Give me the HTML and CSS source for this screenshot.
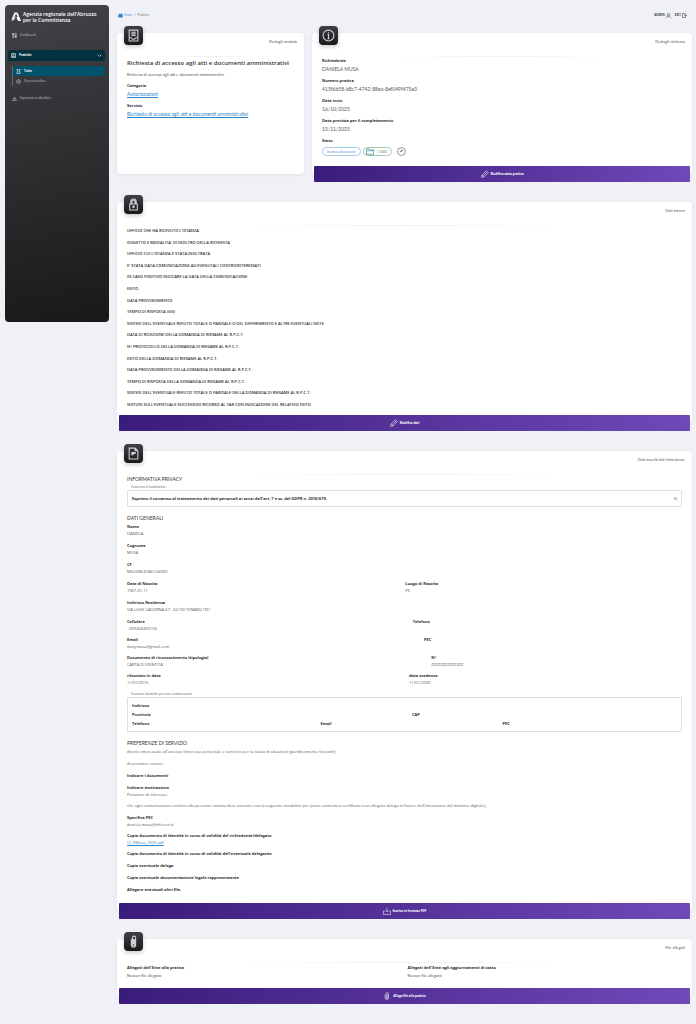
FILE: index.html
```html
<!DOCTYPE html>
<html lang="it">

<head>
	<meta charset="UTF-8">
	<meta name="viewport" content="width=device-width, initial-scale=1.0">
	<title>Pratiche</title>
	<link rel="stylesheet" href="styles.css">
</head>

<body>
	<aside class="sidebar">
		<a class="brand" href="#">
			<svg class="brand-logo" viewBox="0 0 20 20"><path d="M7 1h6l3 7-3 1-3-6-5 12H1z" /><path d="M10 7c0 5-3 10-9 11l1-2c4-1 6-4 8-9zM11 10l5-2 4 10h-5c-2-1-3-4-4-8z" /></svg>
			<span>Agenzia regionale dell'Abruzzo<br>per la Committenza</span>
		</a>
		<nav class="menu">
			<a class="menu-item" href="#">
				<svg class="ico" viewBox="0 0 16 16"><path class="fill" d="M1 1h6v8H1zM1 11h6v4H1zM9 1h6v4H9zM9 7h6v8H9z" /></svg>
				Dashboard
			</a>
			<a class="menu-item open" href="#">
				<svg class="ico" viewBox="0 0 16 16"><path d="M2 1h12v14H2zM5 4h6M5 7h6M2 11h4l1 2h2l1-2h4" /></svg>
				Pratiche
				<svg class="ico arrow" viewBox="0 0 16 16"><path d="M2 5l6 6 6-6" /></svg>
			</a>
			<div class="submenu">
				<a class="menu-item active" href="#">
					<svg class="ico" viewBox="0 0 16 16"><path d="M3 1h10v4l-4 3 4 3v4H3v-4l4-3-4-3z" /></svg>
					Tutte
				</a>
				<a class="menu-item" href="#">
					<svg class="ico" viewBox="0 0 16 16"><circle cx="8" cy="8" r="6" /><path d="M5 8h6" /></svg>
					Da protocollare
				</a>
			</div>
			<a class="menu-item export" href="#">
				<svg class="ico" viewBox="0 0 16 16"><path d="M2 14l3-6h6l3 6zM8 8V3" /></svg>
				Esportazione Actafisio
			</a>
		</nav>
	</aside>

	<main class="main">
		<header class="topbar">
			<nav class="breadcrumb">
				<a href="#"><svg class="ico" viewBox="0 0 16 16"><path class="fill" d="M1 4h3V2h9v2h2v10H1z" /></svg>Home</a>
				<span>/</span>
				<span>Pratiche</span>
			</nav>
			<nav class="user">
				<a href="#">ADMIN <svg class="ico" viewBox="0 0 16 16"><circle cx="8" cy="5" r="4" /><path d="M2 16c0-4 3-6 6-6s6 2 6 6" /></svg></a>
				<a href="#">ESCI <svg class="ico" viewBox="0 0 16 16"><path d="M11 5V2H1v12h10v-3M7 8h8M12 5l3 3-3 3" /></svg></a>
			</nav>
		</header>

		<div class="cards-row">
			<section class="card">
				<div class="card-head">
					<span class="badge"><svg viewBox="0 0 24 24"><path d="M4 2h16v20H4zM8 6h8M8 9h8M8 12h8M4 16h4l2 3h4l2-3h4" /></svg></span>
					<span>Dettagli modulo</span>
				</div>
				<h1>Richiesta di accesso agli atti e documenti amministrativi</h1>
				<p class="subtitle">Richiesta di accesso agli atti e documenti amministrativi</p>
				<dl class="details">
					<div>
						<dt>Categoria</dt>
						<dd><a href="#">Autorizzazioni</a></dd>
					</div>
					<div>
						<dt>Servizio</dt>
						<dd><a href="#">Richiesta di accesso agli atti e documenti amministrativi</a></dd>
					</div>
				</dl>
			</section>

			<section class="card">
				<div class="card-head">
					<span class="badge"><svg viewBox="0 0 24 24"><circle cx="12" cy="12" r="10" /><path d="M10 10h2v8M10 18h4M12 6v2" /></svg></span>
					<span>Dettagli richiesta</span>
				</div>
				<dl class="details">
					<div>
						<dt>Richiedente</dt>
						<dd>DANIELA MUSA</dd>
					</div>
					<div>
						<dt>Numero pratica</dt>
						<dd>415f6b58-b8c7-4742-88ea-8ef049f475e3</dd>
					</div>
					<div>
						<dt>Data invio</dt>
						<dd>16/10/2025</dd>
					</div>
					<div>
						<dt>Data prevista per il completamento</dt>
						<dd>15/11/2025</dd>
					</div>
					<div>
						<dt>Stato</dt>
						<dd class="status">
							<span class="pill">In attesa di revisione</span>
							<span class="pill green"><svg viewBox="0 0 20 16"><path d="M1 15V1h6l2 3h10v11zM1 6h18" /></svg>123456</span>
							<svg class="clock" viewBox="0 0 16 16"><circle cx="8" cy="8" r="7" /><path d="M8 4v4H5M11 5l-3 3" /></svg>
						</dd>
					</div>
				</dl>
				<button type="button" class="action"><svg viewBox="0 0 16 16"><path d="M1 15l1-5 9-9 4 4-9 9zM9 3l4 4M2 10l4 4M4 12l7-7" /></svg>Modifica stato pratica</button>
			</section>
		</div>

		<section class="card internal">
			<div class="card-head">
				<span class="badge"><svg viewBox="0 0 24 24"><path d="M5 11h14v11H5zM7 11V7c0-7 10-7 10 0v4M9 11V7c0-4 6-4 6 0v4M12 15v4M11 15h2v2h-2z" /></svg></span>
				<span>Dati interni</span>
			</div>
			<ul class="internal-list">
				<li>UFFICIO CHE HA RICEVUTO L'ISTANZA</li>
				<li>OGGETTO E MODALITA' DI INOLTRO DELLA RICHIESTA</li>
				<li>UFFICIO CUI L'ISTANZA È STATA INOLTRATA</li>
				<li>E' STATA DATA COMUNICAZIONE AD EVENUTALI CONTROINTERESSATI</li>
				<li>IN CASO POSITIVO INDICARE LA DATA DELLA COMUNICAZIONE</li>
				<li>ESITO</li>
				<li>DATA PROVVEDIMENTO</li>
				<li>TEMPO DI RISPOSTA (GG)</li>
				<li>SINTESI DELL'EVENTUALE RIFIUTO TOTALE O PARZIALE O DEL DIFFERIMENTO E ALTRE EVENTUALI NOTE</li>
				<li>DATA DI RICEZIONE DELLA DOMANDA DI RIESAME AL R.P.C.T.</li>
				<li>N° PROTOCOLLO DELLA DOMANDA DI RIESAME AL R.P.C.T.</li>
				<li>ESITO DELLA DOMANDA DI RIESAME AL R.P.C.T.</li>
				<li>DATA PROVVEDIMENTO DELLA DOMANDA DI RIESAME AL R.P.C.T.</li>
				<li>TEMPO DI RISPOSTA DELLA DOMANDA DI RIESAME AL R.P.C.T.</li>
				<li>SINTESI DELL'EVENTUALE RIFIUTO TOTALE O PARZIALE DELLA DOMANDA DI RIESAME AL R.P.C.T.</li>
				<li>NOTIZIE SULL'EVENTUALE SUCCESSIVO RICORSO AL TAR CON INDICAZIONE DEL RELATIVO ESITO</li>
			</ul>
			<button type="button" class="action"><svg viewBox="0 0 16 16"><path d="M1 15l1-5 9-9 4 4-9 9zM9 3l4 4M2 10l4 4M4 12l7-7" /></svg>Modifica dati</button>
		</section>

		<section class="card">
			<div class="card-head">
				<span class="badge"><svg viewBox="0 0 24 24"><path d="M4 2h11l5 5v15H4zM15 2v5h5M8 10h8M8 12h8M8 14h4" /></svg></span>
				<span>Dati inseriti dal richiedente</span>
			</div>

			<h2>INFORMATIVA PRIVACY</h2>
			<fieldset>
				<legend>Consenso al trattamento</legend>
				<div class="box consent">
					<b>Esprimo il consenso al trattamento dei dati personali ai sensi dell'art. 7 e ss. del GDPR n. 2016/679.</b>
					<span>Sì</span>
				</div>
			</fieldset>

			<h2 class="general-title">DATI GENERALI</h2>
			<dl class="general">
				<div><dt>Nome</dt><dd>DANIELA</dd></div>
				<div><dt>Cognome</dt><dd>MUSA</dd></div>
				<div><dt>CF</dt><dd>MSUDNL67A51G438V</dd></div>
			</dl>
			<div class="split">
				<dl><dt>Data di Nascita</dt><dd>1967-01-11</dd></dl>
				<dl><dt>Luogo di Nascita</dt><dd>PE</dd></dl>
			</div>
			<dl class="general">
				<div><dt>Indirizzo Residenza</dt><dd>VIA LUIGI CADORNA 67 - 64100 TERAMO (TE)</dd></div>
			</dl>
			<div class="split">
				<dl><dt>Cellulare</dt><dd>+393403493104</dd></dl>
				<dl><dt>Telefono</dt></dl>
			</div>
			<div class="split">
				<dl><dt>Email</dt><dd>danymusa@gmail.com</dd></dl>
				<dl><dt>PEC</dt></dl>
			</div>
			<div class="split">
				<dl><dt>Documento di riconoscimento (tipologia)</dt><dd>CARTA DI IDENTITA'</dd></dl>
				<dl><dt>N°</dt><dd>ZZZZZZZZZZZZZZ</dd></dl>
			</div>
			<div class="split">
				<dl><dt>rilasciato in data</dt><dd>11/01/2015</dd></dl>
				<dl><dt>data scadenza</dt><dd>11/01/2030</dd></dl>
			</div>

			<fieldset class="domicile">
				<legend>Eventuale domicilio per invio comunicazioni</legend>
				<div class="box address">
					<div><b>Indirizzo</b></div>
					<div><b>Provincia</b><b>CAP</b></div>
					<div><b>Telefono</b><b>Email</b><b>PEC</b></div>
				</div>
			</fieldset>

			<h2 class="service-title">PREFERENZE DI SERVIZIO</h2>
			<div class="answers">
				<p>diretto interessato all'accesso (interesse personale e concreto per la tutela di situazioni giuridicamente rilevanti);</p>
				<p>di prendere visione</p>
				<p><b>Indicare i documenti</b></p>
				<dl><dt>Indicare motivazione</dt><dd>Portatore di interesse</dd></dl>
				<p>che ogni comunicazione relativa alla presente istanza deve avvenire con la seguente modalità: per posta elettronica certificata (con allegata delega in favore dell'intestatario del dominio digitale);</p>
				<dl><dt>Specifica PEC</dt><dd>daniela.musa@infocert.it</dd></dl>
				<dl><dt>Copia documento di identità in corso di validità del richiedente/delegato</dt><dd><a href="#">CI_DMusa_2025.pdf</a></dd></dl>
				<p><b>Copia documento di identità in corso di validità dell'eventuale delegante</b></p>
				<p><b>Copia eventuale delega</b></p>
				<p><b>Copia eventuale documentazione legale rappresentante</b></p>
				<p><b>Allegare eventuali altri file.</b></p>
			</div>
			<button type="button" class="action"><svg viewBox="0 0 16 16"><path d="M4 8H1v7h14V8h-3M8 1v9M5 7l3 3 3-3" /></svg>Scarica in formato PDF</button>
		</section>

		<section class="card">
			<div class="card-head">
				<span class="badge"><svg viewBox="0 0 24 24"><path d="M14 8v10c0 3-4 3-4 0V5c0-4 6-4 6 0v13c0 6-8 6-8 0V8M12 7v10" /></svg></span>
				<span>File allegati</span>
			</div>
			<div class="attachments">
				<dl><dt>Allegati dell'Ente alla pratica</dt><dd>Nessun file allegato</dd></dl>
				<dl><dt>Allegati dell'Ente agli aggiornamenti di stato</dt><dd>Nessun file allegato</dd></dl>
			</div>
			<button type="button" class="action"><svg viewBox="0 0 16 16"><path d="M10 5v7c0 2-4 2-4 0V3c0-3 5-3 5 0v9c0 4-7 4-7 0V5M8 4v8" /></svg>Allega file alla pratica</button>
		</section>
	</main>
</body>

</html>
```

FILE: styles.css
```css
* {
	box-sizing: border-box;
}

body {
	font-family: "Open Sans", Lato, sans-serif;
	font-size: 4px;
	line-height: 7px;
	color: #55585d;
	background-color: #eff1f6;
	margin: 0;
	padding: 5px 4px 20px 5px;
	display: flex;
	align-items: flex-start;
	gap: 8px;
}

h1, h2, p, dl, dd, ul, fieldset {
	margin: 0;
	padding: 0;
}

a {
	color: #2f86cc;
}

svg {
	fill: none;
	stroke: currentColor;
	stroke-width: 2;
	flex: none;
}

.fill {
	fill: currentColor;
	stroke: none;
}

.ico {
	width: 5px;
	height: 5px;
}

dt, b {
	color: #2b2d31;
	font-weight: bold;
}

/* Sidebar */
.sidebar {
	width: 104px;
	min-height: 317px;
	flex: none;
	padding: 6px 4px;
	border-radius: 4px;
	color: #c4c4c8;
	background-image: linear-gradient(170deg, #424247, #191919);
}

.sidebar a {
	color: inherit;
	text-decoration: none;
}

.brand {
	display: flex;
	align-items: center;
	gap: 2px;
	padding-left: 2px;
	font-size: 5px;
	font-weight: 600;
	line-height: 6px;
}

.sidebar .brand {
	color: #fff;
}

.brand-logo {
	width: 10px;
	height: 10px;
	fill: currentColor;
	stroke: none;
}

.menu {
	padding-top: 7px;
	font-size: 3px;
}

.menu-item {
	display: flex;
	align-items: center;
	gap: 3px;
	height: 11px;
	padding: 0 3px;
	border-radius: 2px;
}

.menu-item.open {
	margin: 9px 0 5px -1px;
	background-color: #02323f;
	color: #fff;
	font-weight: bold;
}

.arrow {
	margin-left: auto;
}

.submenu {
	margin-left: 3px;
	border-left: 1px solid #67676c;
}

.submenu .menu-item {
	height: 10px;
}

.menu-item.active {
	background-color: #00536b;
	color: #fff;
	font-weight: bold;
}

.menu-item.export {
	margin-top: 7px;
}

/* Content */
.main {
	flex: 1;
	min-width: 0;
}

.topbar {
	display: flex;
	justify-content: space-between;
	padding: 7px 5px 14px 1px;
	font-size: 3px;
}

.topbar a {
	display: flex;
	align-items: center;
	gap: 1px;
	text-decoration: none;
}

.breadcrumb, .user {
	display: flex;
	gap: 2px;
}

.user {
	gap: 4px;
}

.user a {
	color: #444;
	font-weight: bold;
}

.cards-row {
	display: grid;
	grid-template-columns: 33fr 67fr;
	gap: 8px;
}

.card {
	display: flex;
	flex-direction: column;
	background-color: #fff;
	border-radius: 4px;
	padding: 0 10px;
	margin-bottom: 28px;
	box-shadow: 0 1px 4px rgba(0, 0, 0, 0.06);
}

.card-head {
	display: flex;
	justify-content: space-between;
	align-items: center;
	height: 24px;
	margin: 0 -3px 0 -3px;
	padding-bottom: 6px;
	font-family: Lato, sans-serif;
	border-bottom: 1px solid;
	border-image: linear-gradient(90deg, transparent 20%, #f0f0f3, transparent 80%) 1;
}

.badge {
	display: grid;
	place-items: center;
	width: 19px;
	height: 19px;
	margin-top: -12px;
	border-radius: 4px;
	color: #d0d0d4;
	background-image: linear-gradient(#3f3f45, #19191b);
	box-shadow: 0 2px 4px rgba(0, 0, 0, 0.2);
}

.badge svg {
	width: 13px;
	height: 13px;
}

h1 {
	margin-top: 2px;
	font-size: 6px;
	font-weight: 600;
	line-height: 8px;
	color: #33363b;
}

.subtitle {
	margin: 4px 0;
	font-family: Lato, sans-serif;
}

.details {
	display: grid;
	gap: 4px;
	line-height: 8px;
	color: #55585d;
}

.details dd {
	font-family: Lato, sans-serif;
	font-size: 5px;
}

.details .status {
	display: flex;
	align-items: center;
	gap: 2px;
	padding-top: 2px;
	font-family: inherit;
}

.pill {
	display: flex;
	align-items: center;
	gap: 3px;
	height: 9px;
	padding: 0 4px;
	border: 1px solid #a5cbef;
	border-radius: 5px;
	font-size: 3px;
	color: #2f7bd0;
}

.pill.green {
	padding-left: 2px;
	border-color: #a4c9a4;
	color: #4d7a4d;
}

.pill svg {
	width: 8px;
	height: 7px;
	color: #4f9aa5;
}

.clock {
	width: 9px;
	height: 9px;
	margin-left: 3px;
	color: #444;
	stroke-width: 1;
}

.action {
	display: flex;
	justify-content: center;
	align-items: center;
	gap: 2px;
	height: 16px;
	margin: auto -8px -8px;
	padding: 0;
	border: none;
	border-radius: 1px;
	font-family: inherit;
	font-size: 3px;
	font-weight: bold;
	color: #fff;
	background-image: linear-gradient(100deg, #3a1c7a, #7049b9);
	cursor: pointer;
}

.action svg {
	width: 8px;
	height: 8px;
	stroke-width: 1;
}

.cards-row .card {
	min-height: 141px;
}

.internal {
	min-height: 221px;
}

.internal-list {
	flex: 1;
	display: flex;
	flex-direction: column;
	justify-content: space-between;
	padding: 1px 0 7px;
	list-style: none;
	font-weight: 600;
	color: #2b2d31;
}

h2 {
	font-family: Lato, sans-serif;
	font-size: 5px;
	font-weight: normal;
	line-height: 8px;
	color: #33363b;
}

fieldset {
	border: none;
	min-width: 0;
}

legend {
	padding: 2px 4px 0;
	font-size: 3px;
	line-height: 5px;
}

.box {
	border: 1px solid #dedfe3;
	border-radius: 1px;
	padding: 4px;
}

.consent {
	display: flex;
	justify-content: space-between;
}

.general-title {
	margin-top: 7px;
}

.general {
	display: grid;
	gap: 5px;
	margin: 1px 0 5px;
}

.split {
	display: flex;
	gap: 4px;
	margin-bottom: 4px;
}

.split > *, .address b {
	flex: 1 1 auto;
}

.address {
	display: grid;
	gap: 2px;
}

.address div {
	display: flex;
	gap: 4px;
}

.service-title {
	margin: 7px 0 1px;
}

.answers p {
	margin-bottom: 5px;
}

.answers dl {
	margin-bottom: 4px;
}

.answers {
	padding-bottom: 5px;
}

.attachments {
	display: grid;
	grid-template-columns: 1fr 1fr;
	gap: 6px;
	padding: 1px 0 8px;
	line-height: 8px;
}

.attachments dd {
	font-family: Lato, sans-serif;
}
```
